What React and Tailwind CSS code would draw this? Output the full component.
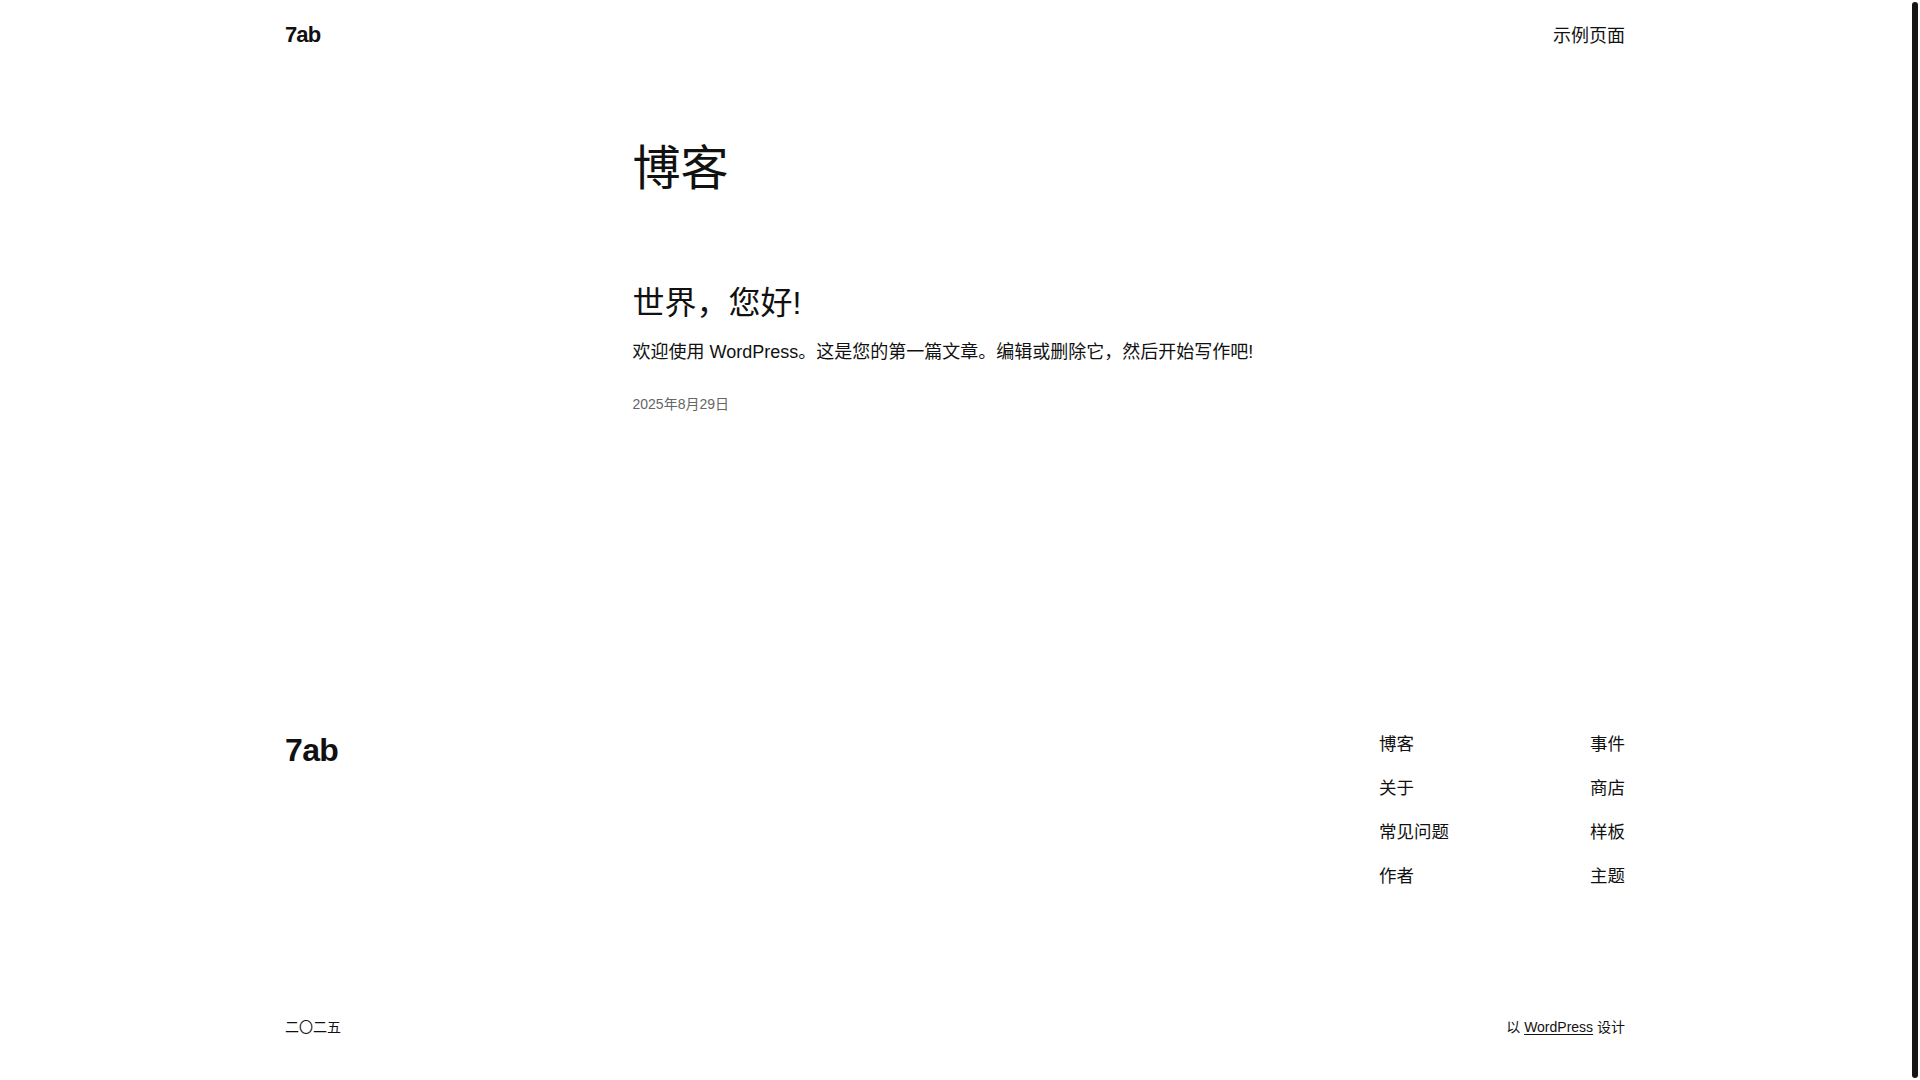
export default function App() {
  const navLeft = ["博客", "关于", "常见问题", "作者"]
  const navRight = ["事件", "商店", "样板", "主题"]

  return (
    <div
      className="flex h-[1080px] w-[1920px] overflow-hidden bg-white text-[#111111]"
      style={{ fontFamily: '"Liberation Sans", "Noto Sans CJK SC", sans-serif' }}
    >
      <div className="flex w-[1910px] flex-col">
        {/* header */}
        <header className="mx-auto flex h-[68px] w-[1340px] items-center justify-between">
          <a className="text-[22px] font-bold tracking-[-0.04em]">7ab</a>
          <nav className="mt-[5px] text-[18px] leading-[1.4]">示例页面</nav>
        </header>

        {/* main */}
        <main className="mx-auto w-[645px]">
          <h1 className="mt-[72px] text-[48px] leading-[1.2] font-normal">博客</h1>
          <article className="mt-[86px]">
            <h2 className="text-[32px] leading-[1.2] font-normal">世界，您好!</h2>
            <p className="mt-[16px] text-[18px] leading-[1.6]">
              欢迎使用 WordPress。这是您的第一篇文章。编辑或删除它，然后开始写作吧!
            </p>
            <div className="mt-[28px] text-[14px] leading-[1.4] text-[#666666]">2025年8月29日</div>
          </article>
        </main>

        {/* footer */}
        <footer className="mx-auto mt-[317px] w-[1340px]">
          <div className="flex items-start justify-between">
            <a className="text-[32px] leading-[1.2] font-bold tracking-[-0.02em]">7ab</a>
            <div className="flex gap-[141px] text-[17.5px] leading-[26px]">
              <ul className="flex flex-col gap-[18px]">
                {navLeft.map((item) => (
                  <li key={item}>{item}</li>
                ))}
              </ul>
              <ul className="flex flex-col gap-[18px]">
                {navRight.map((item) => (
                  <li key={item}>{item}</li>
                ))}
              </ul>
            </div>
          </div>
          <div className="mt-[128px] flex items-center justify-between text-[14px] leading-[20px]">
            <span>二〇二五</span>
            <span>
              以 <a className="underline underline-offset-2">WordPress</a> 设计
            </span>
          </div>
        </footer>
      </div>

      {/* overlay scrollbar */}
      <div className="flex w-[10px] py-[2px] pl-[2px]">
        <div className="h-full w-[6px] rounded-full bg-[#151515]" />
      </div>
    </div>
  )
}
